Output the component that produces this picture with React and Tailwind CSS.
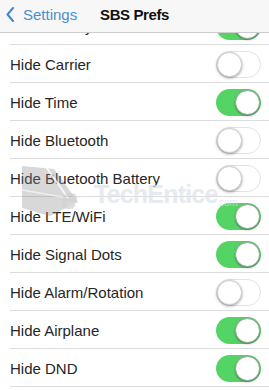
import React from "react";

const rows = [
  { label: "Hide Battery", on: true },
  { label: "Hide Carrier", on: false },
  { label: "Hide Time", on: true },
  { label: "Hide Bluetooth", on: false },
  { label: "Hide Bluetooth Battery", on: false },
  { label: "Hide LTE/WiFi", on: true },
  { label: "Hide Signal Dots", on: true },
  { label: "Hide Alarm/Rotation", on: false },
  { label: "Hide Airplane", on: true },
  { label: "Hide DND", on: true },
];

function Toggle({ on }) {
  if (on) {
    return (
      <div className="w-[45px] h-[27px] rounded-full bg-[#55d466] flex items-center justify-end p-[1px] mt-[2px]">
        <div className="w-[25px] h-[25px] rounded-full bg-white shadow-[0_1px_2px_rgba(0,0,0,0.35)] border border-[#9aa39a]" />
      </div>
    );
  }
  return (
    <div className="w-[45px] h-[27px] rounded-full bg-white border-[1.5px] border-[#e2e2e2] flex items-center justify-start mt-[2px]">
      <div className="w-[25px] h-[25px] rounded-full bg-white shadow-[0_1px_3px_rgba(0,0,0,0.4)] border border-[#d0d0d0]" />
    </div>
  );
}

export default function App() {
  return (
    <div
      className="relative w-[269px] h-[390px] overflow-hidden bg-white flex flex-col"
      style={{ fontFamily: '"Liberation Sans", Arial, sans-serif' }}
    >
      <div className="relative z-10 h-[33px] shrink-0 bg-[#f7f7f7] border-b border-[#cdcdcd] grid grid-cols-[1fr_auto_1fr] items-center pb-[3px]">
        <div className="flex items-center pl-[6px] gap-[9px]">
          <svg width="8" height="15" viewBox="0 0 8 15" fill="none">
            <path d="M7 1 L1.5 7.5 L7 14" stroke="#3f88cc" strokeWidth="2" strokeLinecap="round" strokeLinejoin="round" />
          </svg>
          <span className="text-[15px] text-[#4a8fcb] leading-none">Settings</span>
        </div>
        <span className="text-[15px] font-bold text-[#111] tracking-[-0.4px] leading-none">SBS Prefs</span>
        <div />
      </div>
      <div className="flex-1 overflow-hidden">
        <div className="-mt-[26px] flex flex-col">
          {rows.map((r) => (
            <div
              key={r.label}
              className="h-[38px] ml-[10px] pr-[8px] border-b border-[#dcdcdc] flex items-center justify-between"
            >
              <span className="text-[15px] text-[#262626] leading-none pt-[1px]">{r.label}</span>
              <Toggle on={r.on} />
            </div>
          ))}
        </div>
      </div>
      <div className="pointer-events-none absolute left-0 top-[160px] w-[269px] h-[60px]">
        <svg className="absolute left-[20px] top-[4px]" width="62" height="56" viewBox="0 0 62 56">
          <polygon points="2,2 34,5 58,38 30,52 2,44" fill="#8a8a8a" opacity="0.33" />
          <line x1="26" y1="3" x2="48" y2="34" stroke="#ffffff" strokeWidth="2" opacity="0.8" />
          <line x1="2" y1="26" x2="48" y2="34" stroke="#ffffff" strokeWidth="1.5" opacity="0.6" />
        </svg>
        <span className="absolute left-[61px] top-[24px] text-[30px] font-bold italic leading-none text-[#d2d2d2] opacity-70">e</span>
        <span className="absolute left-[94px] top-[22px] text-[25px] font-bold leading-none tracking-[-0.8px] text-[#dce2ec] opacity-70">TechEntice</span>
        <span className="absolute left-[216px] top-[38px] text-[10px] leading-none text-[#dce2ec] opacity-70">.com</span>
      </div>
    </div>
  );
}
